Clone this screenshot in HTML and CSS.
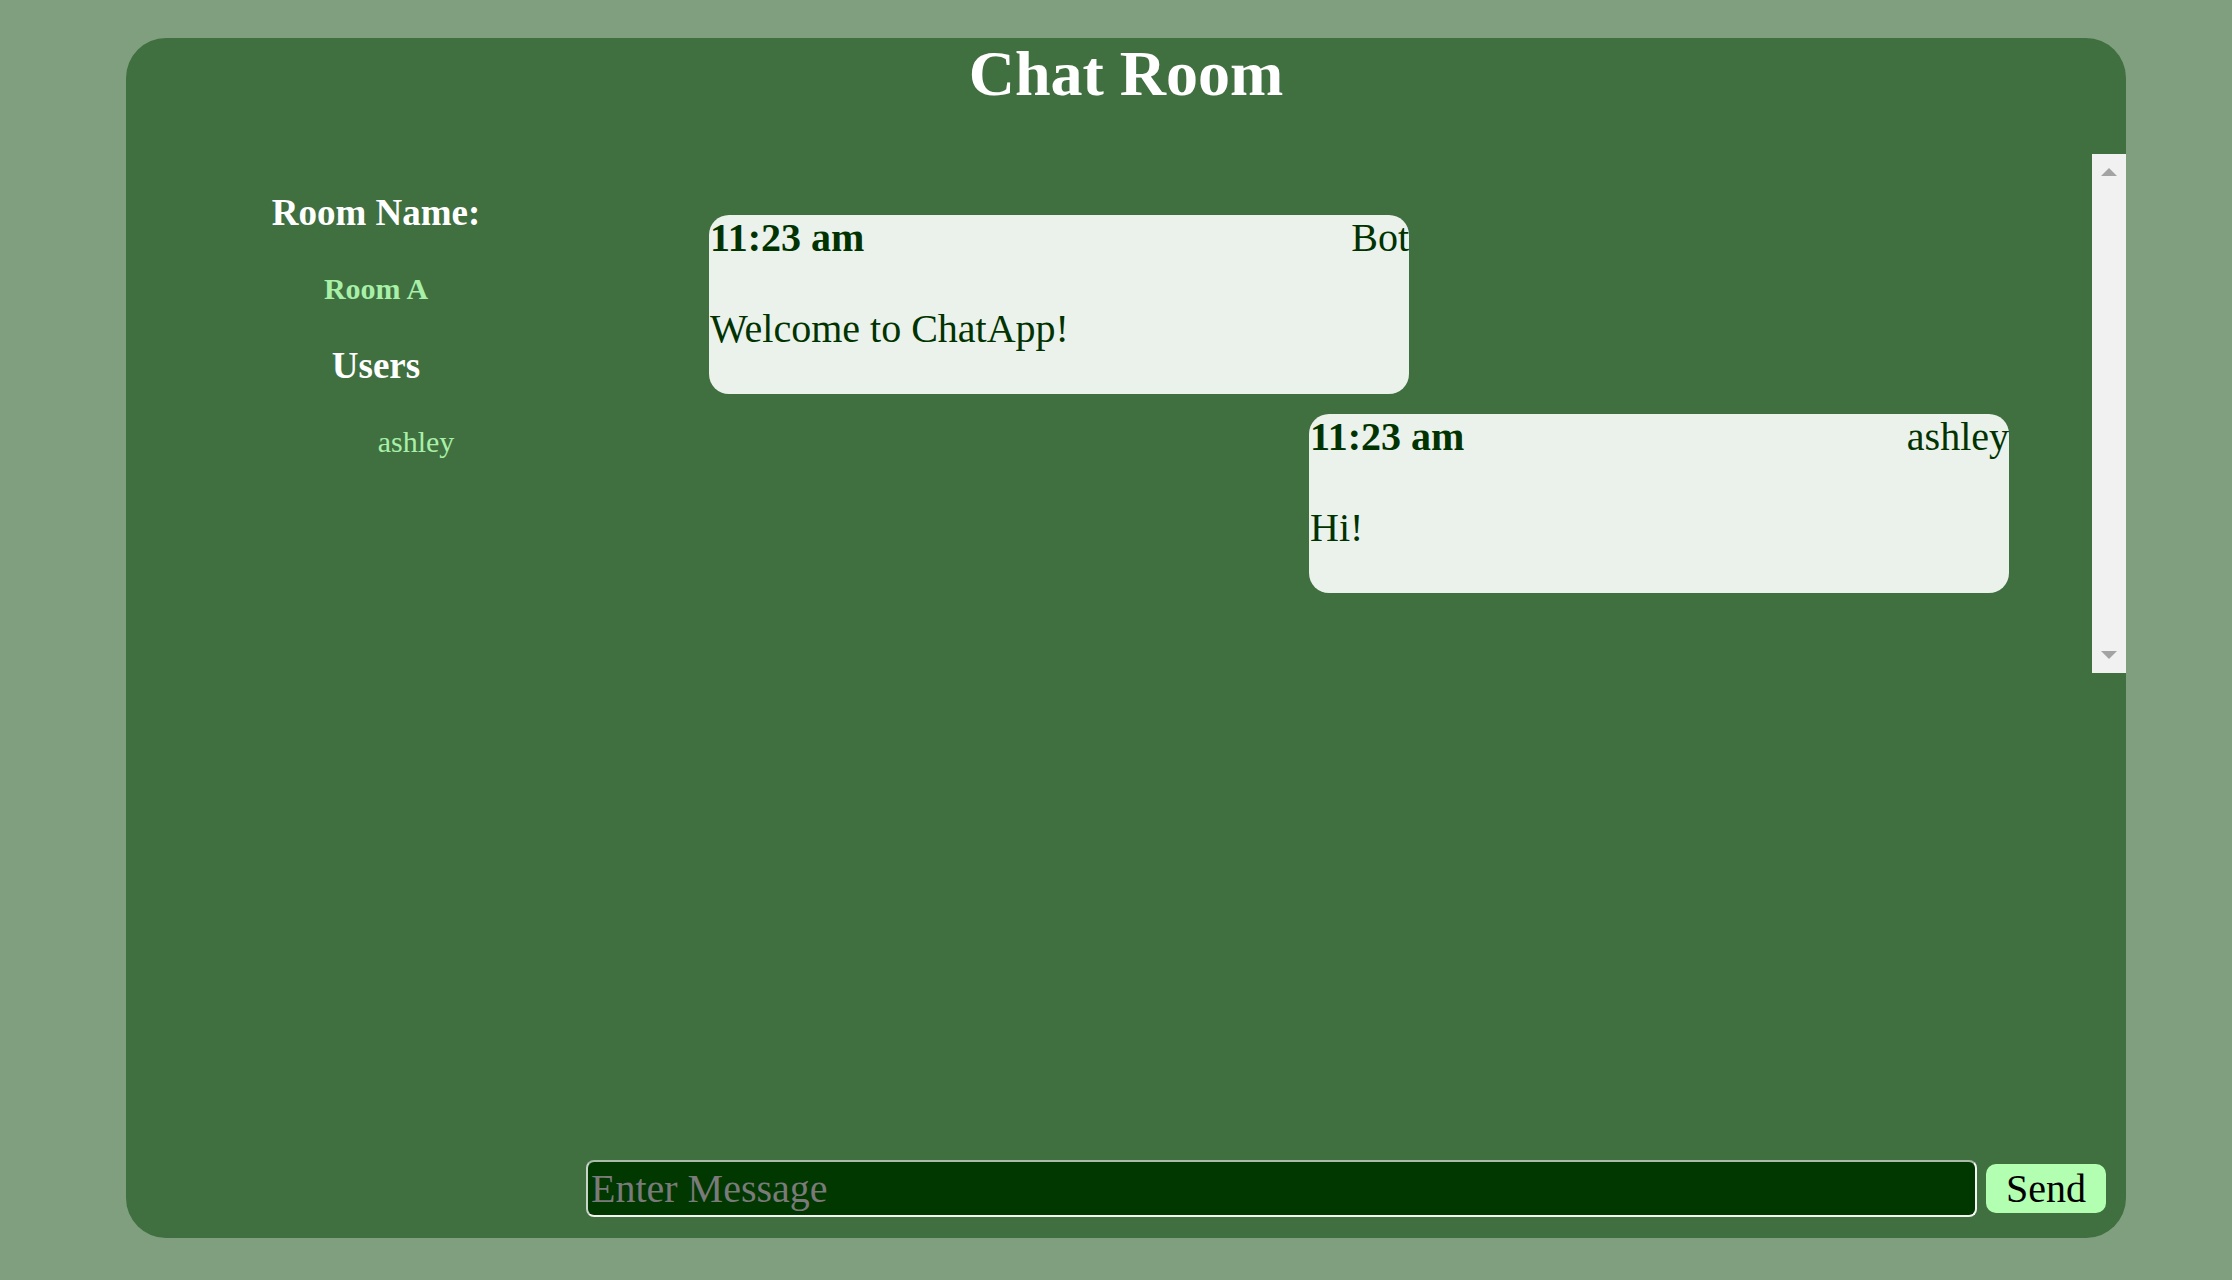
FILE: index.html
```html
<!DOCTYPE html>
<html lang="en">
<head>
<meta charset="utf-8">
<title>Chat Room</title>
<link rel="stylesheet" href="styles.css">
</head>
<body>
<div class="app">
  <h1 class="title">Chat Room</h1>
  <div class="main">
    <aside class="sidebar">
      <h3 class="side-heading">Room Name:</h3>
      <h4 class="room-name">Room A</h4>
      <h3 class="side-heading">Users</h3>
      <ul class="users"><li>ashley</li></ul>
    </aside>
    <section class="messages">
      <div class="message-list">
        <div class="message incoming">
          <div class="meta"><span class="time">11:23 am</span><span class="author">Bot</span></div>
          <p class="text">Welcome to ChatApp!</p>
        </div>
        <div class="message outgoing">
          <div class="meta"><span class="time">11:23 am</span><span class="author">ashley</span></div>
          <p class="text">Hi!</p>
        </div>
      </div>
      <div class="scrollbar">
        <span class="scroll-btn"><span class="arrow-up"></span></span>
        <span class="scroll-btn"><span class="arrow-down"></span></span>
      </div>
    </section>
  </div>
  <form class="composer">
    <input class="msg-input" type="text" placeholder="Enter Message">
    <button class="send-btn" type="button">Send</button>
  </form>
</div>
</body>
</html>
```
FILE: styles.css
```css
html, body {
  margin: 0;
  padding: 0;
}
body {
  background: #7f9f7f;
  font-family: "Liberation Serif", "Times New Roman", serif;
  height: 1280px;
  overflow: hidden;
}
.app {
  box-sizing: border-box;
  width: 2000px;
  height: 1200px;
  margin: 38px 0 0 126px;
  background: #406f40;
  border-radius: 40px;
  display: flex;
  flex-direction: column;
}
.title {
  margin: 0 0 45px;
  font-size: 64px;
  line-height: 71px;
  font-weight: bold;
  color: #ffffff;
  text-align: center;
}
.main {
  display: flex;
  height: 519px;
  flex: none;
}
.sidebar {
  box-sizing: border-box;
  width: 500px;
  padding-top: 37px;
  display: flex;
  flex-direction: column;
  align-items: center;
  gap: 38px;
}
.side-heading {
  margin: 0;
  font-size: 37px;
  line-height: 43px;
  font-weight: bold;
  color: #ffffff;
}
.room-name {
  margin: 0;
  font-size: 30px;
  line-height: 34px;
  font-weight: bold;
  color: #a8f0a8;
}
.users {
  align-self: stretch;
  margin: 0;
  padding: 0 0 0 80px;
  list-style: none;
  text-align: center;
  font-size: 30px;
  line-height: 34px;
  color: #a8f0a8;
}
.messages {
  flex: 1;
  display: flex;
}
.message-list {
  flex: 1;
  display: flex;
  flex-direction: column;
  padding-top: 61px;
  gap: 20px;
}
.message {
  box-sizing: border-box;
  width: 700px;
  height: 179px;
  background: #ebf1eb;
  border-radius: 20px;
  color: #003300;
  padding: 0 0 0 1px;
}
.incoming {
  align-self: flex-start;
  margin-left: 83px;
}
.outgoing {
  align-self: flex-end;
  margin-right: 83px;
}
.meta {
  display: flex;
  justify-content: space-between;
  align-items: baseline;
  height: 46px;
  line-height: 46px;
}
.time {
  font-size: 40px;
  font-weight: bold;
}
.author {
  font-size: 40px;
}
.text {
  margin: 46px 0 0;
  font-size: 40px;
  line-height: 44px;
}
.scrollbar {
  width: 34px;
  height: 519px;
  background: #f1f1f1;
  display: flex;
  flex-direction: column;
  justify-content: space-between;
}
.scroll-btn {
  width: 34px;
  height: 36px;
  display: flex;
  align-items: center;
  justify-content: center;
}
.arrow-up {
  width: 0;
  height: 0;
  border-left: 8px solid transparent;
  border-right: 8px solid transparent;
  border-bottom: 8px solid #a3a3a3;
}
.arrow-down {
  width: 0;
  height: 0;
  border-left: 8px solid transparent;
  border-right: 8px solid transparent;
  border-top: 8px solid #a3a3a3;
}
.composer {
  margin: auto 0 0;
  display: flex;
  justify-content: flex-end;
  align-items: center;
  gap: 9px;
  padding: 0 20px 21px 0;
}
.msg-input {
  box-sizing: border-box;
  width: 1391px;
  height: 57px;
  background: #003800;
  border: 2px solid #f4f4f4;
  border-top-color: #a9bba9;
  border-left-color: #c8d4c8;
  border-radius: 8px;
  padding: 0 0 0 3px;
  font-family: "Liberation Serif", "Times New Roman", serif;
  font-size: 40px;
  color: #ffffff;
  outline: none;
}
.msg-input::placeholder {
  color: #7a7a7a;
}
.send-btn {
  box-sizing: border-box;
  width: 120px;
  height: 49px;
  background: #b2ffb2;
  border: none;
  border-radius: 10px;
  padding: 0;
  font-family: "Liberation Serif", "Times New Roman", serif;
  font-size: 40px;
  color: #000000;
}
```
